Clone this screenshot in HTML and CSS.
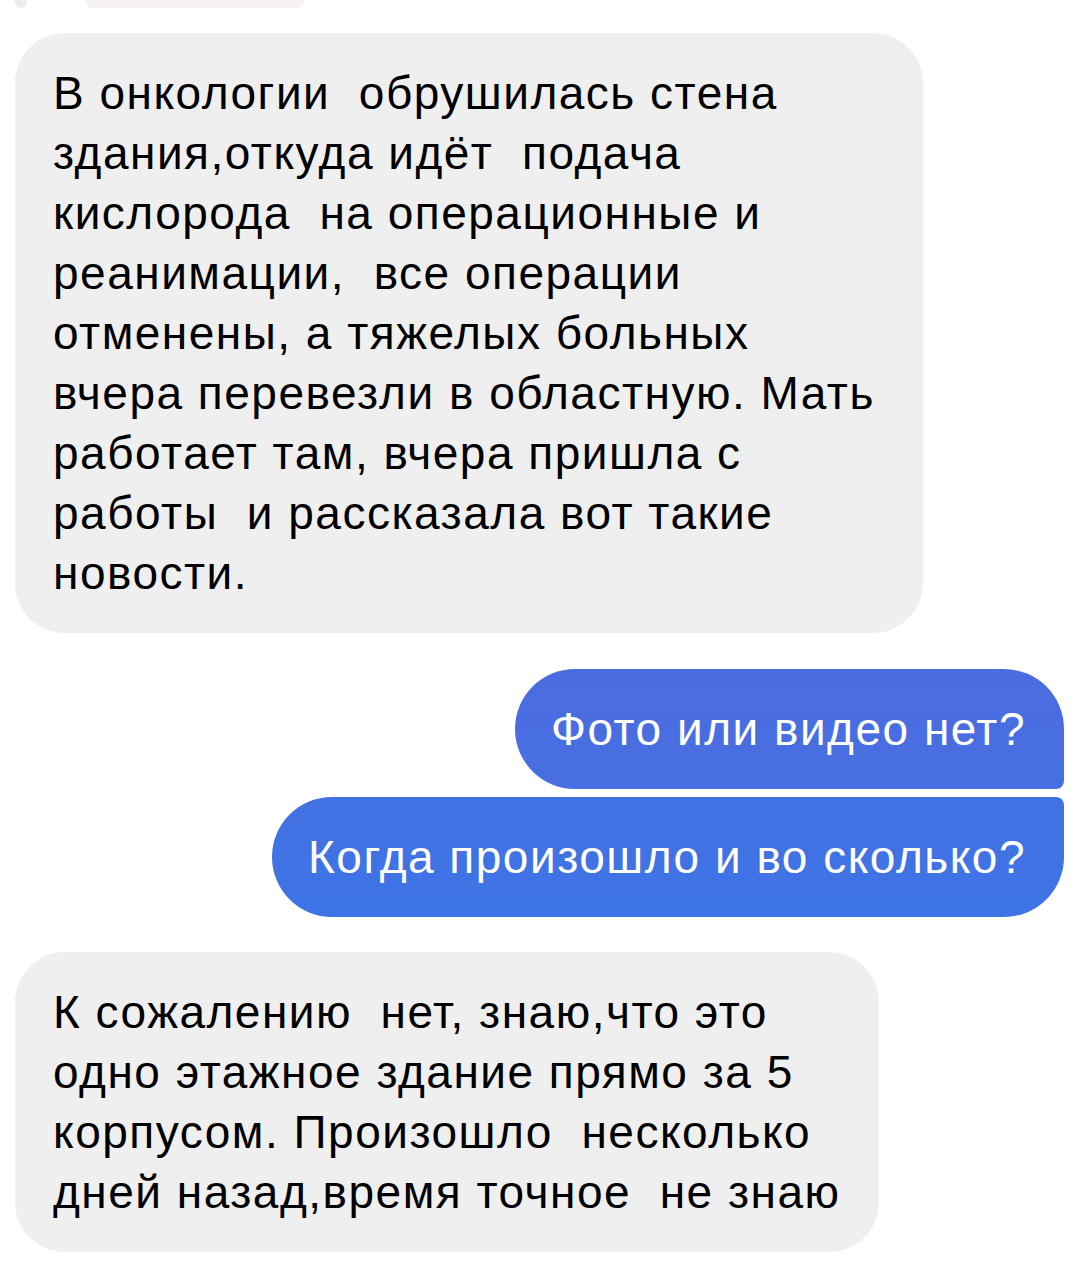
FILE: index.html
```html
<!DOCTYPE html>
<html lang="ru">
<head>
    <meta charset="UTF-8">
    <title>Переписка</title>
    <link rel="stylesheet" href="styles.css">
</head>
<body>
    <div class="chat">
        <div class="prev-row">
            <div class="prev-avatar"></div>
            <div class="prev-bubble"></div>
        </div>

        <div class="bubble incoming first"><span class="line">В онкологии  обрушилась стена</span><span class="line">здания,откуда идёт  подача</span><span class="line">кислорода  на операционные и</span><span class="line">реанимации,  все операции</span><span class="line">отменены, а тяжелых больных</span><span class="line">вчера перевезли в областную. Мать</span><span class="line">работает там, вчера пришла с</span><span class="line">работы  и рассказала вот такие</span><span class="line">новости.</span></div>

        <div class="outgoing-group">
            <div class="bubble outgoing top">Фото или видео нет?</div>
            <div class="bubble outgoing bottom">Когда произошло и во сколько?</div>
        </div>

        <div class="bubble incoming last"><span class="line">К сожалению  нет, знаю,что это</span><span class="line">одно этажное здание прямо за 5</span><span class="line">корпусом. Произошло  несколько</span><span class="line">дней назад,время точное  не знаю</span></div>
    </div>
</body>
</html>
```

FILE: styles.css
```css
body {
    margin: 0;
    background: #fff;
    font-family: "Liberation Sans", Arial, sans-serif;
    color: #000;
}

.chat {
    display: flex;
    flex-direction: column;
    padding: 0 25px 0 15px;
}

.prev-row {
    display: flex;
    height: 8px;
    gap: 58px;
}

.prev-avatar {
    width: 12px;
    height: 8px;
    background: #ececec;
    border-radius: 0 0 6px 6px;
}

.prev-bubble {
    width: 220px;
    height: 8px;
    background: #f8f2f3;
    border-radius: 0 0 20px 20px;
}

.bubble {
    font-size: 46px;
    line-height: 60px;
    letter-spacing: 1.5px;
    padding: 30px 36px;
    box-sizing: border-box;
    white-space: pre;
}

.line {
    display: block;
}

.incoming {
    background: #efefef;
    border-radius: 50px;
    padding-left: 38px;
}

.incoming.first {
    width: 908px;
    margin-top: 25px;
}

.incoming.last {
    width: 864px;
    margin-top: 35px;
}

.outgoing-group {
    display: flex;
    flex-direction: column;
    align-items: flex-end;
    gap: 8px;
    margin-top: 36px;
}

.outgoing {
    color: #fff;
    padding-right: 38px;
}

.outgoing.top {
    background: linear-gradient(180deg, #4b6ce0, #476fe1);
    border-radius: 60px 60px 8px 60px;
}

.outgoing.bottom {
    background: linear-gradient(180deg, #4371e3, #3e74e6);
    border-radius: 60px 8px 60px 60px;
}
```
